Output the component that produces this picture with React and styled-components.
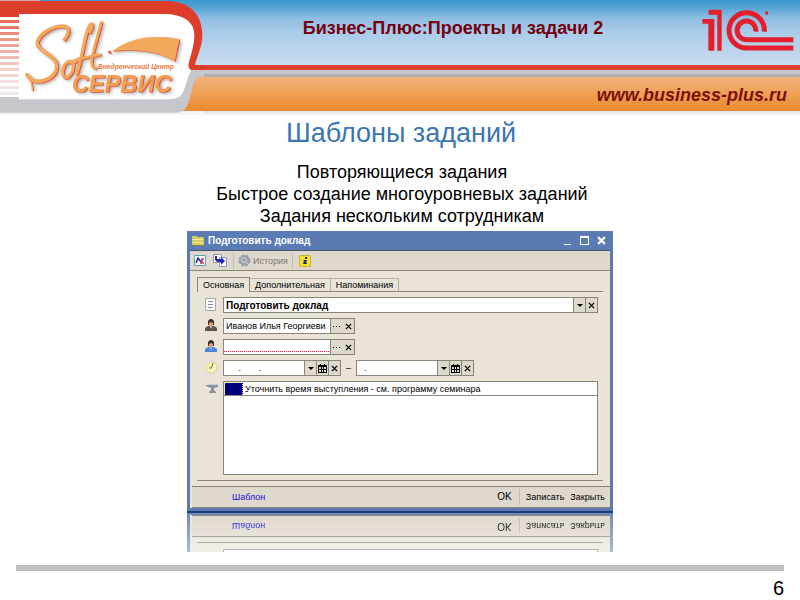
import React from "react";
import styled, { createGlobalStyle, css } from "styled-components";

const GlobalStyle = createGlobalStyle`
  *, *::before, *::after { box-sizing: border-box; }
  body { margin: 0; background: #fff; font-family: "Liberation Sans", Arial, sans-serif; color: #000; }
  button, input { font: inherit; color: inherit; margin: 0; padding: 0; border: 0; border-radius: 0; background: none; }
  h1, h2, p { margin: 0; font-weight: normal; }
`;

const edge = "#8a8577";
const face = "#e9e3d8";
const bar = "#dfd8cd";

/* ---------- slide ---------- */

const Slide = styled.div`
  min-height: 100vh;
  display: flex;
  flex-direction: column;
`;

const Header = styled.header`
  display: flex;
  height: 115px;
  background: linear-gradient(
    #3a96cf 0, #58a4d6 8px, #8fbde1 18px, #a9cbe8 32px, #c9dcf0 65px,
    #dc4030 65px, #dc4030 70px,
    #cbc9d0 70px, #c6c6cc 74px, #a9abab 74px, #b0afab 77px,
    #f2b27a 77px, #efa55f 90px, #ea8a2c 111px,
    #dde2e8 111px, #f6f8fa 115px
  );
`;

const Banner = styled.div`
  flex: 1;
  display: flex;
  flex-direction: column;
`;

const BannerTop = styled.div`
  display: flex;
  height: 77px;
`;

const Product = styled.p`
  flex: 1;
  padding-top: 18px;
  text-align: center;
  font-size: 18px;
  line-height: 20px;
  font-weight: bold;
  color: #720010;
`;

const Site = styled.a`
  align-self: flex-end;
  padding: 8px 13px 0 0;
  font-size: 18px;
  line-height: 20px;
  font-weight: bold;
  font-style: italic;
  color: #7c1108;
  text-decoration: none;
`;

const Main = styled.main`
  flex: 1;
  display: flex;
  flex-direction: column;
  align-items: center;
`;

const Title = styled.h1`
  padding-left: 2px;
  font-size: 27px;
  line-height: 36px;
  color: #3b76b3;
`;

const Points = styled.div`
  padding: 10px 0 4px 4px;
  text-align: center;
  font-size: 18px;
  line-height: 22px;
`;

const Footer = styled.footer`
  margin: 0 16px;
  height: 35px;
  border-top: 6px solid #bfbfbf;
  padding-top: 5px;
  text-align: right;
  font-size: 20px;
  line-height: 24px;
`;

const LogoSvg = styled.svg`
  flex: none;
  display: block;
`;

const OneCSvg = styled.svg`
  flex: none;
  display: block;
  margin: 9px 6px 0 0;
`;

/* ---------- dialog ---------- */

const Dialog = styled.section`
  width: 100%;
  max-width: 426px;
  font-size: 9px;
  line-height: 12px;
`;

const Frame = styled.div`
  border: solid #5c7ab0;
  border-width: 0 3px 3px;
  background: ${face};
`;

const TitleBar = styled.div`
  display: flex;
  align-items: center;
  height: 20px;
  padding: 0 0 0 2px;
  background: #5a7bb4;
  border-bottom: 1px solid #48546c;
  color: #fff;
`;

const Caption = styled.h2`
  flex: 1;
  padding-left: 4px;
  font-size: 10px;
  line-height: 12px;
  font-weight: bold;
`;

const PlainButton = styled.button`
  display: flex;
  align-items: center;
  justify-content: center;
  gap: 2px;
  height: 16px;
  min-width: 17px;
  font-size: ${(p) => (p.$main ? "10px" : "inherit")};
  color: ${(p) => (p.$muted ? "#7d7a72" : "inherit")};
`;

const Toolbar = styled.div`
  display: flex;
  align-items: center;
  gap: 4px;
  height: 20px;
  padding: 0 1px;
  background: ${bar};
  border-bottom: 1px solid ${edge};
`;

const Separator = styled.span`
  width: 1px;
  height: 16px;
  background: #c2bbae;
`;

const Tabs = styled.div`
  display: flex;
  align-items: flex-end;
  height: 21px;
  margin: 0 7px;
  border-bottom: 1px solid ${edge};
`;

const Tab = styled.button`
  height: 13px;
  padding: 0 5px;
  line-height: 12px;
  white-space: nowrap;
  border: solid #b5afa2;
  border-width: 1px 1px 0 0;
  ${(p) =>
    p.$active &&
    css`
      height: 15px;
      margin-bottom: -1px;
      border-color: ${edge};
      border-left-width: 1px;
      background: ${face};
    `}
`;

const Form = styled.div`
  display: grid;
  gap: 5px;
  margin: 0 7px;
  padding: 5px;
  border-bottom: 1px solid ${edge};
`;

const Row = styled.div`
  display: grid;
  grid-template-columns: 21px 1fr;
  align-items: start;
`;

const Label = styled.label`
  display: block;
  padding: 1px 0 0 3px;
  height: 16px;
`;

const Fields = styled.div`
  display: flex;
  align-items: center;
  gap: 5px;
`;

const Combo = styled.div`
  display: flex;
  height: 16px;
  border: 1px solid ${edge};
  background: #fff;
  ${(p) => (p.$wide ? "flex: 1;" : "")}
`;

const widths = { name: "106px", date: "80px" };

const Input = styled.input`
  min-width: 0;
  height: 14px;
  padding: 0 2px;
  outline: 0;
  ${(p) => (p.$strong ? "font-size: 10px; font-weight: bold;" : "")}
  ${(p) => (p.$size ? `width: ${widths[p.$size]};` : "flex: 1;")}
  ${(p) =>
    p.$required &&
    css`
      background: linear-gradient(90deg, #d02848 50%, #f4c8d0 50%) 2px 11px / 2px 1px repeat-x;
    `}
`;

const ComboButton = styled.button`
  display: flex;
  align-items: center;
  justify-content: center;
  width: 12px;
  height: 14px;
  background: ${bar};
  border-left: ${(p) => (p.$joined ? "0" : `1px solid ${edge}`)};
`;

const TaskBox = styled.div`
  height: 94px;
  border: 1px solid ${edge};
  background: #fff;
`;

const TaskTable = styled.table`
  width: 100%;
  border-collapse: collapse;
  border-bottom: 1px solid ${edge};
`;

const MarkCell = styled.td`
  width: 18px;
  height: 12px;
  padding: 0;
  background: #00007c;
  border: 1px dotted #d8d8a0;
`;

const TaskCell = styled.td`
  height: 12px;
  padding: 0 2px;
  line-height: 12px;
  white-space: nowrap;
`;

const Actions = styled.div`
  display: flex;
  align-items: center;
  gap: 6px;
  height: 22px;
  margin: 5px 0 0 2px;
  padding: 0 5px 0 40px;
  background: ${bar};
  border: solid ${edge};
  border-width: 1px 0;
`;

const TemplateLink = styled.a`
  margin-right: auto;
  color: #1810d0;
  text-decoration: none;
`;

const Reflection = styled.div`
  height: 41px;
  overflow: hidden;
  border-top: 2px solid #1c3f80;
`;

const Mirror = styled.div`
  transform: scaleY(-1);
  border: solid #7089b5;
  border-width: 0 3px 2px;
  background: ${face};
  mask-image: linear-gradient(rgba(0, 0, 0, 0.55), #000);
`;

const MirrorForm = styled.div`
  height: 12px;
  margin: 0 7px;
  padding: 0 5px 0 26px;
  border-bottom: 1px solid ${edge};
`;

const MirrorBox = styled.div`
  height: 5px;
  background: #fff;
  border: solid ${edge};
  border-width: 0 1px 1px;
`;

/* ---------- drawings ---------- */

const STRIPES = [
  ["#e8705c", 60], ["#e87a68", 78], ["#ea8c7c", 96], ["#ea9888", 114], ["#eca498", 132],
  ["#eeb0a6", 150], ["#efbcb4", 168], ["#f0c6c0", 186], ["#f2d0cc", 204], ["#f2d8d6", 222],
  ["#f3dfde", 240], ["#f3e4e4", 258], ["#f2e8e8", 276],
];

const SoftLogo = () => (
  <LogoSvg width="204" height="115" viewBox="0 0 612 345" role="img" aria-label="Soft Сервис">
    <defs>
      <filter id="relief" x="-10%" y="-10%" width="120%" height="120%">
        <feDropShadow dx="3" dy="2" stdDeviation="0" floodColor="#dc5030" result="edge" />
        <feDropShadow in="edge" dx="5" dy="4" stdDeviation="5" floodColor="#555" floodOpacity="0.45" />
      </filter>
    </defs>
    <path fill="#fff" d="M0 30H490C560 30 590 65 590 105C590 130 582 160 574 195L572 214L545 300H0Z" />
    <path fill="#fff" d="M0 290H530V345H0Z" />
    {STRIPES.map(([color, y]) => (
      <rect key={y} x="0" y={y} width="57" height="9" fill={color} />
    ))}
    <path fill="#f4f5f7" d="M0 334H612V345H0Z" />
    <path fill="#c6c7cc" d="M0 291H57V298H500C540 298 545 288 555 262C565 235 563 211 590 211H612V230H600C585 230 581 250 572 284C563 318 557 338 528 338H0Z" />
    <path fill="#dd3d2b" d="M0 3H500C570 3 607 45 607 105C607 140 590 170 585 195H612V210H580C566 210 563 200 567 185C575 160 583 130 583 105C583 65 550 42 490 42H57V51H0Z" />
    <rect x="0" y="0" width="120" height="3" fill="#d8a8a0" />
    <g filter="url(#relief)">
      <g fill="none" stroke="#f2a95c" strokeLinecap="round" strokeLinejoin="round">
        <path strokeWidth="10" d="M193 118C206 104 212 84 192 79C166 74 122 96 112 124C106 148 150 160 166 184C178 208 160 234 128 242C108 247 90 240 80 224" />
        <path strokeWidth="4" d="M84 228C92 240 97 252 97 270" />
        <path strokeWidth="9" d="M206 184C188 192 182 224 194 232C206 236 220 214 220 198C220 186 214 182 206 184C214 190 226 186 236 176" />
        <path strokeWidth="9" d="M270 96C280 74 276 68 270 74C258 90 252 132 246 160C240 186 236 204 230 222" />
        <path strokeWidth="8" d="M303 68C296 100 282 140 276 172C273 192 276 204 286 204" />
        <path strokeWidth="7" d="M222 182C246 176 270 168 300 164" />
      </g>
      <path fill="#f2a95c" d="M336 154C390 112 460 102 538 118L524 184C476 152 400 144 336 154Z" />
      <circle fill="#e8683c" cx="328" cy="156" r="4" />
      <text x="215" y="276" fontSize="71" fontWeight="bold" fontStyle="italic" fontFamily="Liberation Sans, Arial, sans-serif" fill="#f2a050">СЕРВИС</text>
    </g>
    <text x="294" y="208" fontSize="20" fontWeight="bold" fontStyle="italic" fontFamily="Liberation Sans, Arial, sans-serif" fill="#e8783c">Внедренческий Центр</text>
  </LogoSvg>
);

const OneC = () => (
  <OneCSvg width="92" height="43" viewBox="0 0 276 129" role="img" aria-label="1С">
    <g fill="#e31e2d">
      <path d="M1 30H37V125H19V44H1Z" />
      <path d="M20 2H59V125H46V17H20Z" />
      <circle cx="194" cy="12" r="5" />
    </g>
    <g fill="none" stroke="#e31e2d" strokeWidth="15">
      <path d="M187 68A53 53 0 1 0 134 117H274" />
      <path d="M161 68A28 28 0 1 0 134 92H274" />
    </g>
  </OneCSvg>
);

const Cross = ({ size = 7, width = 2 }) => (
  <svg width={size} height={size} viewBox="0 0 8 8" fill="none" stroke="currentColor" strokeWidth={width}>
    <path d="M1 1L7 7M7 1L1 7" />
  </svg>
);
const Arrow = () => (
  <svg width="6" height="3" viewBox="0 0 6 3"><path d="M0 0H6L3 3Z" /></svg>
);
const Dots = () => (
  <svg width="7" height="1" viewBox="0 0 7 1"><path d="M0 0h1v1h-1zM3 0h1v1h-1zM6 0h1v1h-1z" /></svg>
);
const Calendar = () => (
  <svg width="9" height="9" viewBox="0 0 9 9"><path fillRule="evenodd" d="M0 1h2V0h1v1h3V0h1v1h2v8H0zM1 3v2h2V3zM4 3v2h1V3zM6 3v2h2V3zM1 6v2h2V6zM4 6v2h1V6zM6 6v2h2V6z" /></svg>
);
const Folder = () => (
  <svg width="12" height="11" viewBox="0 0 12 11">
    <path fill="#d8ca62" d="M0 1H5L6 2H12V11H0Z" />
    <path stroke="#f6eea8" d="M1 4.500H11M1 7.500H11" />
    <path stroke="#8d8440" d="M0 10.500H12" />
  </svg>
);
const Minimize = () => (
  <svg width="9" height="10" viewBox="0 0 9 10"><path fill="#fff" d="M1 8h7v1H1z" /></svg>
);
const Maximize = () => (
  <svg width="9" height="10" viewBox="0 0 9 10"><path fill="#fff" fillRule="evenodd" d="M0 0h9v9H0zM1 2v6h7V2z" /></svg>
);
const Picture = () => (
  <svg width="12" height="11" viewBox="0 0 12 11">
    <path fill="#fff" stroke="#5aa0b8" d="M.5 .5H11.500V10.500H.5Z" />
    <path fill="none" stroke="#20248c" strokeWidth="1.500" d="M2 8L4 3L7 7" />
    <path fill="none" stroke="#c83050" strokeWidth="1.500" d="M7 4H9L7 8H10" />
  </svg>
);
const Copy = () => (
  <svg width="15" height="13" viewBox="0 0 15 13">
    <path fill="#fff" stroke="#8c98b8" d="M.5 .5H8.500V8.500H.5ZM6.500 3.500H13.500V12.500H6.500Z" />
    <path fill="#2828b8" d="M2 2H4V5H8V3L12 7L8 11V8H4L2 6Z" />
  </svg>
);
const History = () => (
  <svg width="13" height="13" viewBox="0 0 13 13">
    <circle cx="6.500" cy="6.500" r="5" fill="#97a0a8" stroke="#97a0a8" strokeWidth="2" strokeDasharray="3 1" />
    <circle cx="6" cy="6" r="2.500" fill="none" stroke="#d2d6d8" />
    <path stroke="#d2d6d8" d="M8 8L10 10" />
  </svg>
);
const Info = () => (
  <svg width="12" height="12" viewBox="0 0 12 12">
    <path fill="#f5e02c" stroke="#c8b838" d="M.5 .5H11.500V11.500H.5Z" />
    <path fill="#28306c" d="M6 2h2v2H6zM5 5h3l-1 3h1v1H4l1-3H4z" />
  </svg>
);
const Sheet = () => (
  <svg width="11" height="13" viewBox="0 0 11 13">
    <path fill="#fdfdfd" stroke="#a9a9a4" d="M.5 .5H10.500V12.500H.5Z" />
    <path stroke="#8890a0" d="M3 3.500H8M3 6.500H8M3 9.500H8" />
  </svg>
);
const Person = ({ body, hair }) => (
  <svg width="12" height="12" viewBox="0 0 12 12">
    <path fill={body} d="M0 12V9L3 7H9L12 9V12Z" />
    <path fill="#fff" d="M5 7H7L6 10Z" />
    <path fill="#d8a080" d="M4 3H8V6L7 8H5L4 6Z" />
    <path fill={hair} d="M3 6V2L5 0H7L9 2V6H8V4L6 3L4 4V6Z" />
  </svg>
);
const Clock = () => (
  <svg width="13" height="13" viewBox="0 0 13 13">
    <circle cx="6.500" cy="6.500" r="5.500" fill="#f6f3b4" stroke="#cfc987" strokeDasharray="2 1" />
    <path fill="none" stroke="#6c7060" d="M8 2L6.500 7H4" />
  </svg>
);
const Anvil = () => (
  <svg width="13" height="11" viewBox="0 0 13 11">
    <path fill="#8a94a0" d="M0 3H3V2H13V5L9 6V8L11 10V11H4V10L6 8V6L3 5Z" />
    <path fill="#c8d0d8" d="M3 2H13V3H3Z" />
  </svg>
);

/* ---------- composed parts ---------- */

const DateField = ({ id, label, value }) => (
  <Combo>
    <Input id={id} aria-label={label} $size="date" defaultValue={value} />
    <ComboButton aria-label="Выбрать"><Arrow /></ComboButton>
    <ComboButton aria-label="Календарь"><Calendar /></ComboButton>
    <ComboButton aria-label="Очистить"><Cross width={1.5} /></ComboButton>
  </Combo>
);

const PersonField = ({ id, value, required }) => (
  <Combo>
    <Input id={id} $size="name" $required={required} defaultValue={value} />
    <ComboButton aria-label="Выбрать"><Dots /></ComboButton>
    <ComboButton aria-label="Очистить" $joined><Cross width={1.5} /></ComboButton>
  </Combo>
);

const ActionBar = () => (
  <Actions>
    <TemplateLink href="#template">Шаблон</TemplateLink>
    <PlainButton $main>OK</PlainButton>
    <Separator />
    <PlainButton>Записать</PlainButton>
    <PlainButton>Закрыть</PlainButton>
  </Actions>
);

const TaskDialog = () => (
  <Dialog>
    <Frame>
      <TitleBar>
        <Folder />
        <Caption>Подготовить доклад</Caption>
        <PlainButton aria-label="Свернуть"><Minimize /></PlainButton>
        <PlainButton aria-label="Развернуть"><Maximize /></PlainButton>
        <PlainButton aria-label="Закрыть окно"><Cross size={9} /></PlainButton>
      </TitleBar>
      <Toolbar>
        <PlainButton aria-label="Оформление"><Picture /></PlainButton>
        <PlainButton aria-label="Скопировать"><Copy /></PlainButton>
        <Separator />
        <PlainButton $muted><History />История</PlainButton>
        <Separator />
        <PlainButton aria-label="Справка"><Info /></PlainButton>
      </Toolbar>
      <Tabs role="tablist">
        <Tab role="tab" aria-selected="true" $active>Основная</Tab>
        <Tab role="tab" aria-selected="false">Дополнительная</Tab>
        <Tab role="tab" aria-selected="false">Напоминания</Tab>
      </Tabs>
      <Form>
        <Row>
          <Label htmlFor="subject" aria-label="Тема"><Sheet /></Label>
          <Combo $wide>
            <Input id="subject" $strong defaultValue="Подготовить доклад" />
            <ComboButton aria-label="Выбрать"><Arrow /></ComboButton>
            <ComboButton aria-label="Очистить"><Cross width={1.5} /></ComboButton>
          </Combo>
        </Row>
        <Row>
          <Label htmlFor="author" aria-label="Автор"><Person body="#5c5250" hair="#403028" /></Label>
          <Fields><PersonField id="author" value="Иванов Илья Георгиеви" /></Fields>
        </Row>
        <Row>
          <Label htmlFor="performer" aria-label="Исполнитель"><Person body="#4888dc" hair="#403028" /></Label>
          <Fields><PersonField id="performer" value="" required /></Fields>
        </Row>
        <Row>
          <Label htmlFor="start" aria-label="Срок"><Clock /></Label>
          <Fields>
            <DateField id="start" label="Начало" value="     .       ." />
            <span>–</span>
            <DateField id="end" label="Окончание" value="  ." />
          </Fields>
        </Row>
        <Row>
          <Label as="span"><Anvil /></Label>
          <TaskBox>
            <TaskTable>
              <tbody>
                <tr>
                  <MarkCell />
                  <TaskCell>Уточнить время выступления - см. программу семинара</TaskCell>
                </tr>
              </tbody>
            </TaskTable>
          </TaskBox>
        </Row>
      </Form>
      <ActionBar />
    </Frame>
    <Reflection aria-hidden="true" inert>
      <Mirror>
        <MirrorForm><MirrorBox /></MirrorForm>
        <ActionBar />
      </Mirror>
    </Reflection>
  </Dialog>
);

export default function App() {
  return (
    <>
      <GlobalStyle />
      <Slide>
        <Header>
          <SoftLogo />
          <Banner>
            <BannerTop>
              <Product>Бизнес-Плюс:Проекты и задачи 2</Product>
              <OneC />
            </BannerTop>
            <Site href="http://www.business-plus.ru">www.business-plus.ru</Site>
          </Banner>
        </Header>
        <Main>
          <Title>Шаблоны заданий</Title>
          <Points>
            <p>Повторяющиеся задания</p>
            <p>Быстрое создание многоуровневых заданий</p>
            <p>Задания нескольким сотрудникам</p>
          </Points>
          <TaskDialog />
        </Main>
        <Footer>6</Footer>
      </Slide>
    </>
  );
}
